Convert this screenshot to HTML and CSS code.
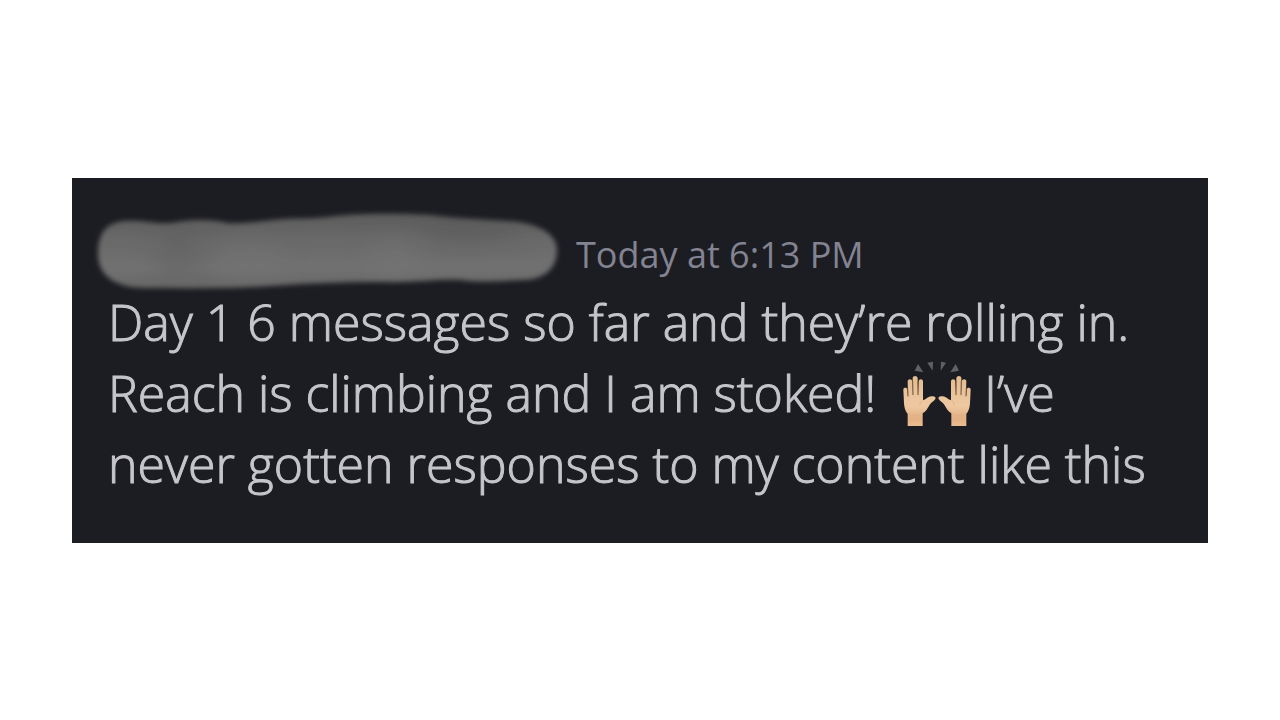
FILE: index.html
```html
<!DOCTYPE html>
<html lang="en">
<head>
<meta charset="utf-8">
<meta name="viewport" content="width=device-width, initial-scale=1">
<title>Message</title>
<link rel="stylesheet" href="styles.css">
</head>
<body>
<main class="page">
  <article class="card">
    <header class="meta">
      <svg class="author" viewBox="0 0 468 72" role="img" aria-label="Hidden name">
        <defs>
          <filter id="soft" x="-5%" y="-15%" width="110%" height="130%"><feGaussianBlur stdDeviation="2.6"/></filter>
          <filter id="wide" x="-80%" y="-80%" width="260%" height="260%"><feGaussianBlur stdDeviation="12"/></filter>
          <linearGradient id="shade" x1="0" y1="0" x2="0" y2="1">
            <stop offset="0" stop-color="#5a5a5a"/>
            <stop offset=".35" stop-color="#696969"/>
            <stop offset=".7" stop-color="#717171"/>
            <stop offset="1" stop-color="#646464"/>
          </linearGradient>
          <clipPath id="smear"><path d="M28 7C50 6 56 10 75 9C95 5 115 5 132 9C150 10 165 7 188 5C205 4 215 5 232 3C260-1 300-1 335 1C355 4 385 5 410 7C440 8 461 19 461 36C461 54 449 65 428 66C400 67 385 69 365 66C340 65 320 69 285 68C240 68 205 70 175 72C135 75 90 74 50 74C18 74 2 61 2 40C2 20 9 9 28 7Z"/></clipPath>
        </defs>
        <g filter="url(#soft)">
          <g clip-path="url(#smear)">
            <rect x="-4" y="-4" width="474" height="84" fill="url(#shade)"/>
            <ellipse cx="82" cy="35" rx="20" ry="28" fill="#5c5c5c" opacity=".4" filter="url(#wide)"/>
            <ellipse cx="155" cy="48" rx="35" ry="18" fill="#777" opacity=".4" filter="url(#wide)"/>
            <ellipse cx="300" cy="45" rx="30" ry="20" fill="#777" opacity=".4" filter="url(#wide)"/>
            <ellipse cx="375" cy="14" rx="50" ry="12" fill="#555" opacity=".5" filter="url(#wide)"/>
          </g>
        </g>
      </svg>
      <time class="time">Today at 6:13 PM</time>
    </header>
    <p class="message">Day 1 6 messages so far and they’re rolling in.<br>Reach is climbing and I am stoked! <svg class="emoji" viewBox="39 30 204 198" role="img" aria-label="Raising hands">
      <defs>
        <linearGradient id="skin" x1="0" y1="0" x2="0" y2="1">
          <stop offset="0" stop-color="#e3bd91"/>
          <stop offset=".6" stop-color="#eec8a0"/>
          <stop offset=".85" stop-color="#e2b083"/>
          <stop offset="1" stop-color="#e9bc91"/>
        </linearGradient>
        <g id="hand">
          <path fill="url(#skin)" d="M53 228L53 192C46 184 43 174 42 160L40 119C40 112 51 111 52 119L54 140L53 94C53 86 66 86 67 94L68 134L68 85C68 76 82 76 83 85L84 134L86 94C86 86 99 86 99 94L99 150C108 150 112 140 124 139C134 137 139 142 136 147C132 154 124 156 119 164C113 175 108 184 98 190L98 228Z"/>
          <path fill="none" stroke="#73533a" stroke-width="3" stroke-linecap="round" d="M53 116L54 138M68 94L69 134M84 94L84 134"/>
          <path fill="none" stroke="#dcae84" stroke-width="2" stroke-linecap="round" d="M98 150C94 153 90 158 89 166M56 192C66 197 86 197 96 191"/>
        </g>
      </defs>
      <use href="#hand"/>
      <use href="#hand" transform="matrix(-1 0 0 1 282 0)"/>
      <path fill="#606164" d="M84 42L100 67L74 62ZM112 38L129 35L128 62ZM153 35L168 38L152 62ZM197 42L207 62L181 67Z"/>
    </svg> I’ve<br>never gotten responses to my content like this</p>
  </article>
</main>
</body>
</html>
```
FILE: styles.css
```css
* {
  box-sizing: border-box;
}

body {
  margin: 0;
  background: #fff;
  font-family: "Open Sans", "Noto Sans", sans-serif;
}

.page {
  min-height: 100vh;
  padding: 0 72px;
  display: flex;
  flex-direction: column;
  justify-content: center;
}

.card {
  padding: 36px 36px 43px;
  background: #1c1d22;
}

.meta {
  display: flex;
  align-items: center;
  gap: 12px;
  height: 73px;
  margin-left: -12px;
}

.author {
  flex: none;
  width: 468px;
  height: 72px;
  overflow: visible;
}

.time {
  padding-top: 10px;
  color: #838392;
  font-size: 36px;
  line-height: 72px;
  white-space: nowrap;
}

.message {
  margin: 0;
  color: #c5c5ca;
  font-size: 50px;
  font-weight: 300;
  line-height: 71px;
  white-space: nowrap;
  -webkit-text-stroke: 1px #c5c5ca;
}

.emoji {
  width: 68px;
  height: 66px;
  margin-left: 14px;
  overflow: visible;
  vertical-align: -14px;
}
```
